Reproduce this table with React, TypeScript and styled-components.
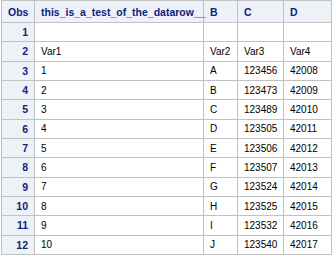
import React from 'react';
import styled, { createGlobalStyle } from 'styled-components';

const GlobalStyle = createGlobalStyle`
  body {
    margin: 0;
    background: #ffffff;
    font-family: "Liberation Sans", Arial, sans-serif;
  }
`;

const Page = styled.div`
  padding: 0 0 0 1px;
`;

const Table = styled.table`
  border-collapse: collapse;
  table-layout: fixed;
  width: 331px;
  border: 1px solid #c1c1c1;
  font-size: 10px;
`;

const Col = styled.col<{ width: number }>`
  width: ${props => props.width}px;
`;

const HeadCell = styled.th<{ align?: string }>`
  height: 21px;
  padding: 0 6px;
  background: #edf2f9;
  color: #112277;
  font-size: 10.5px;
  font-weight: bold;
  text-align: ${props => props.align || 'left'};
  border: 1px solid #c1c1c1;
  white-space: nowrap;
`;

const RowHead = styled.th`
  height: 18.33px;
  padding: 0 6px;
  background: #edf2f9;
  color: #112277;
  font-size: 10.5px;
  font-weight: bold;
  text-align: right;
  border: 1px solid #c1c1c1;
`;

const Cell = styled.td`
  padding: 0 6px;
  color: #000000;
  background: #ffffff;
  border: 1px solid #c1c1c1;
  white-space: nowrap;
`;

const columns = [33, 169, 34, 46, 48];
const headers = ['this_is_a_test_of_the_datarow__', 'B', 'C', 'D'];

const rows: string[][] = [
  ['', '', '', ''],
  ['Var1', 'Var2', 'Var3', 'Var4'],
  ['1', 'A', '123456', '42008'],
  ['2', 'B', '123473', '42009'],
  ['3', 'C', '123489', '42010'],
  ['4', 'D', '123505', '42011'],
  ['5', 'E', '123506', '42012'],
  ['6', 'F', '123507', '42013'],
  ['7', 'G', '123524', '42014'],
  ['8', 'H', '123525', '42015'],
  ['9', 'I', '123532', '42016'],
  ['10', 'J', '123540', '42017'],
];

const App = () => {
  return (
    <Page>
      <GlobalStyle />
      <Table>
        <colgroup>
          {columns.map((w, i) => (
            <Col key={i} width={w} />
          ))}
        </colgroup>
        <thead>
          <tr>
            <HeadCell align="right">Obs</HeadCell>
            {headers.map(h => (
              <HeadCell key={h}>{h}</HeadCell>
            ))}
          </tr>
        </thead>
        <tbody>
          {rows.map((row, i) => (
            <tr key={i}>
              <RowHead>{i + 1}</RowHead>
              {row.map((value, j) => (
                <Cell key={j}>{value}</Cell>
              ))}
            </tr>
          ))}
        </tbody>
      </Table>
    </Page>
  );
};

export default App;
